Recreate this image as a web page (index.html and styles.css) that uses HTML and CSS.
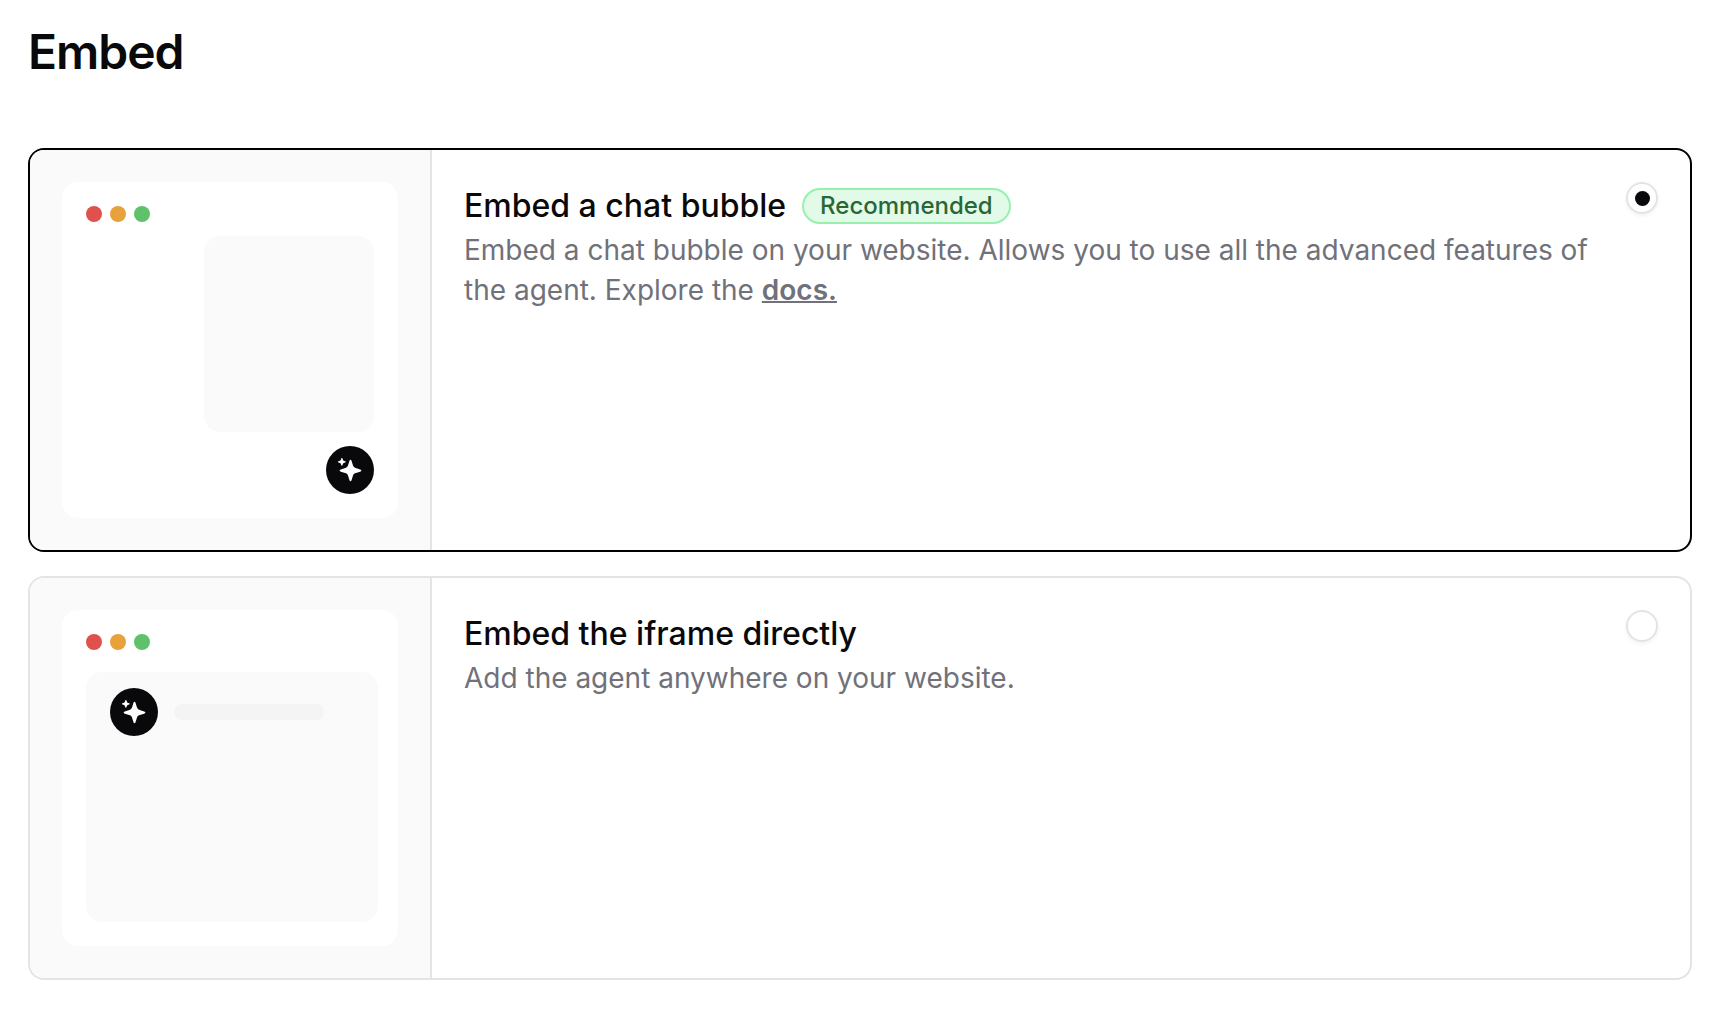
FILE: index.html
```html
<!DOCTYPE html>
<html lang="en">
<head>
<meta charset="utf-8">
<meta name="viewport" content="width=device-width, initial-scale=1">
<title>Embed</title>
<link rel="stylesheet" href="styles.css">
</head>
<body>
<svg class="sprite" aria-hidden="true">
  <symbol id="sparkles" viewBox="0 0 48 48">
    <path d="M24.5 13.7Q25.2 13.7 25.6 14.9L27 19.6Q27.5 21.2 29 21.7L34.2 23.5Q35.4 24 35.4 24.6Q35.4 25.2 34.2 25.7L29 27.3Q27.5 27.8 27 29.4L25.6 34.1Q25.2 35.3 24.5 35.3Q23.8 35.3 23.4 34.1L22 29.4Q21.5 27.8 20 27.3L14.8 25.7Q13.6 25.2 13.6 24.6Q13.6 24 14.8 23.5L20 21.7Q21.5 21.2 22 19.6L23.4 14.9Q23.8 13.7 24.5 13.7Z"/>
    <path d="M15.8 12Q16.3 12 16.5 12.6L17 14.1Q17.2 14.6 17.7 14.8L19.1 15.2Q19.8 15.5 19.8 15.9Q19.8 16.3 19.1 16.5L17.7 17Q17.2 17.2 17 17.7L16.5 19.1Q16.2 19.8 15.8 19.8Q15.4 19.8 15.2 19.1L14.7 17.7Q14.5 17.2 14 17L12.6 16.5Q11.8 16.3 11.8 15.9Q11.8 15.5 12.6 15.2L14 14.8Q14.5 14.6 14.7 14.1L15.2 12.6Q15.4 12 15.8 12Z"/>
  </symbol>
</svg>
<main class="page">
  <h1 class="page-title">Embed</h1>
  <div class="options" role="radiogroup" aria-label="Embed type">
    <section class="card">
      <div class="preview">
        <div class="window">
          <div class="dots"><span class="dot dot-red"></span><span class="dot dot-amber"></span><span class="dot dot-green"></span></div>
          <div class="chat-panel"></div>
          <svg class="avatar avatar-end" aria-hidden="true"><use href="#sparkles"/></svg>
        </div>
      </div>
      <div class="content">
        <div class="copy">
          <div class="title-row">
            <label class="card-title" for="bubble">Embed a chat bubble</label>
            <span class="badge">Recommended</span>
          </div>
          <p class="description">Embed a chat bubble on your website. Allows you to use all the advanced features of the agent. Explore the <a class="docs" href="#docs">docs.</a></p>
        </div>
        <input class="radio" type="radio" name="embed" id="bubble" checked>
      </div>
    </section>
    <section class="card">
      <div class="preview">
        <div class="window window-iframe">
          <div class="dots"><span class="dot dot-red"></span><span class="dot dot-amber"></span><span class="dot dot-green"></span></div>
          <div class="frame-panel">
            <svg class="avatar" aria-hidden="true"><use href="#sparkles"/></svg>
            <span class="line"></span>
          </div>
        </div>
      </div>
      <div class="content">
        <div class="copy">
          <div class="title-row">
            <label class="card-title" for="iframe">Embed the iframe directly</label>
          </div>
          <p class="description">Add the agent anywhere on your website.</p>
        </div>
        <input class="radio" type="radio" name="embed" id="iframe">
      </div>
    </section>
  </div>
</main>
</body>
</html>
```
FILE: styles.css
```css
* { box-sizing: border-box; }
body {
  margin: 0;
  background: #fff;
  color: #09090b;
  font-family: Inter, "Liberation Sans", sans-serif;
}
.sprite { display: none; }
.page { padding: 20px 30px 32px 28px; }
.page-title {
  margin: 0 0 64px;
  font-size: 48px;
  line-height: 64px;
  font-weight: 600;
  letter-spacing: -1px;
}
.options { display: grid; gap: 24px; }
.card {
  display: flex;
  background: #fff;
  border: 2px solid #e4e4e4;
  border-radius: 16px;
  overflow: hidden;
}
.card:has(.radio:checked) { border-color: #000; }
.preview {
  flex: none;
  padding: 32px;
  background: #fafafa;
  border-right: 2px solid #e4e4e4;
}
.window {
  display: flex;
  flex-direction: column;
  gap: 14px;
  width: 336px;
  height: 336px;
  padding: 24px;
  background: #fff;
  border-radius: 16px;
}
.window-iframe { gap: 22px; padding-right: 20px; }
.dots { display: flex; gap: 8px; }
.dot { width: 16px; height: 16px; border-radius: 50%; }
.dot-red { background: #de514c; }
.dot-amber { background: #e8a23b; }
.dot-green { background: #5fc26a; }
.chat-panel {
  flex: 1;
  align-self: flex-end;
  width: 170px;
  background: #fafafa;
  border-radius: 16px;
}
.frame-panel {
  flex: 1;
  display: flex;
  align-items: flex-start;
  gap: 16px;
  padding: 16px 24px;
  background: #fafafa;
  border-radius: 16px;
}
.avatar {
  flex: none;
  width: 48px;
  height: 48px;
  border-radius: 50%;
  background: #09090b;
  fill: #fff;
}
.avatar-end { align-self: flex-end; }
.line {
  width: 150px;
  height: 16px;
  margin-top: 16px;
  border-radius: 8px;
  background: #f4f4f4;
}
.content {
  flex: 1;
  display: flex;
  align-items: flex-start;
  gap: 32px;
  padding: 32px;
}
.copy { flex: 1; }
.title-row { display: flex; align-items: center; gap: 16px; min-height: 48px; }
.card-title { font-size: 32px; line-height: 48px; font-weight: 500; }
.badge {
  padding: 0 16px;
  border: 2px solid #98f0ae;
  border-radius: 18px;
  background: #e2fbe8;
  color: #2a6737;
  font-size: 24px;
  line-height: 32px;
  font-weight: 500;
}
.description {
  margin: 0;
  color: #71717a;
  font-size: 28px;
  line-height: 40px;
}
.docs { color: inherit; font-weight: 600; text-decoration-thickness: 2px; }
.radio {
  appearance: none;
  flex: none;
  display: grid;
  place-items: center;
  width: 32px;
  height: 32px;
  margin: 0;
  border: 2px solid #e4e4e4;
  border-radius: 50%;
  background: #fff;
  box-shadow: 0 2px 4px rgb(0 0 0 / 5%);
}
.radio:checked::before {
  content: "";
  width: 15px;
  height: 15px;
  border-radius: 50%;
  background: #09090b;
}
```
